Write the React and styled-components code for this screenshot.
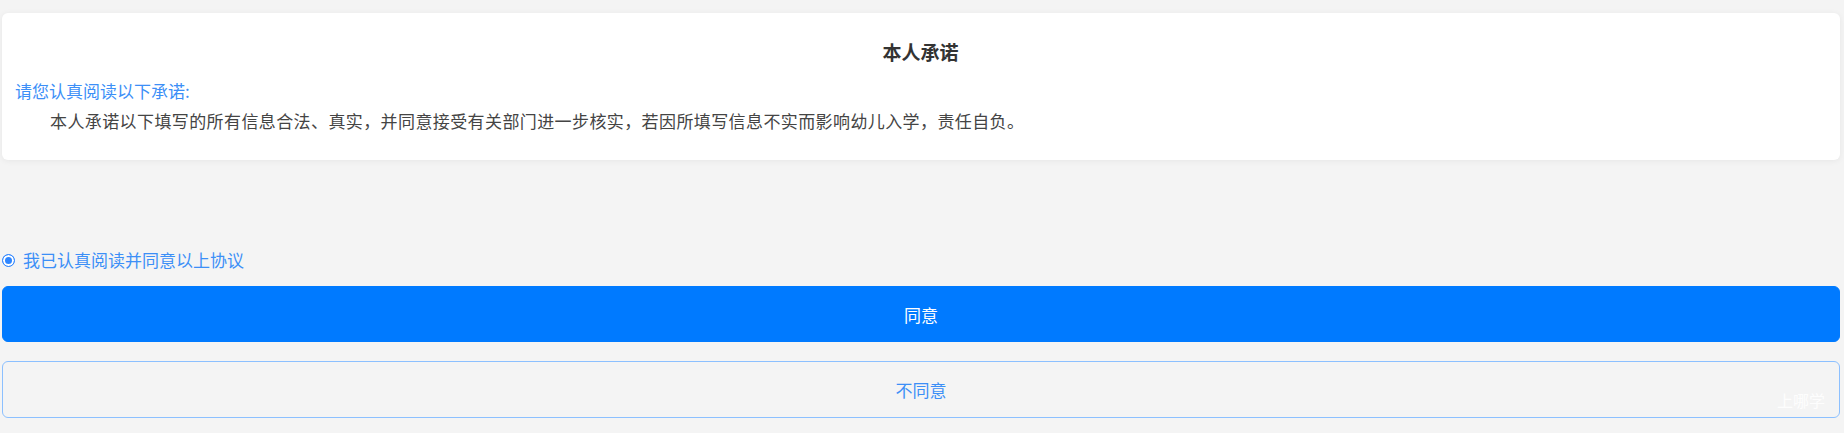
import React, { useState } from "react";
import styled, { createGlobalStyle } from "styled-components";

const GlobalStyle = createGlobalStyle`
  body {
    margin: 0;
    background: #f4f4f4;
    font-family: "Noto Sans CJK SC", "Noto Sans", sans-serif;
  }
`;

const Page = styled.div`
  padding: 13px 4px 0 2px;
  display: flex;
  flex-direction: column;
`;

const Card = styled.div`
  background: #fff;
  border-radius: 6px;
  box-shadow: 0 1px 6px rgba(0, 0, 0, 0.06);
  padding: 26px 14px 24px 13px;
`;

const Title = styled.h2`
  margin: 0 0 11px;
  text-align: center;
  font-size: 19px;
  line-height: 26px;
  font-weight: bold;
  color: #333;
`;

const Hint = styled.div`
  font-size: 17px;
  line-height: 30px;
  color: #3c8ff7;
`;

const Body = styled.p`
  margin: 0;
  font-size: 17px;
  letter-spacing: 0.4px;
  line-height: 30px;
  color: #444;
  text-indent: 35px;
`;

const Agree = styled.label`
  margin-top: 88px;
  display: flex;
  align-items: center;
  gap: 8px;
  font-size: 17px;
  line-height: 24px;
  color: #3c8ff7;
  cursor: pointer;
`;

const Dot = styled.span`
  width: 11px;
  height: 11px;
  border-radius: 50%;
  border: 1.5px solid #2f86ff;
  background: ${(p) => (p.$on ? "#2f86ff" : "#fff")};
  box-shadow: inset 0 0 0 2px #fff;
  flex-shrink: 0;
`;

const Button = styled.button`
  position: relative;
  width: 100%;
  height: ${(p) => (p.$outline ? "57px" : "56px")};
  margin-top: ${(p) => (p.$outline ? "19px" : "14px")};
  border-radius: 6px;
  border: 1.5px solid ${(p) => (p.$outline ? "#8cc0ff" : "#007aff")};
  background: ${(p) => (p.$outline ? "transparent" : "#007aff")};
  color: ${(p) => (p.$outline ? "#3c8ff7" : "#fff")};
  font-family: inherit;
  font-size: 17px;
  cursor: pointer;
`;

const Mark = styled.span`
  position: absolute;
  right: 14px;
  bottom: 5px;
  font-size: 16px;
  color: rgba(255, 255, 255, 0.9);
`;

export default function App() {
  const [agreed, setAgreed] = useState(true);

  return (
    <Page>
      <GlobalStyle />
      <Card>
        <Title>本人承诺</Title>
        <Hint>请您认真阅读以下承诺:</Hint>
        <Body>
          本人承诺以下填写的所有信息合法、真实，并同意接受有关部门进一步核实，若因所填写信息不实而影响幼儿入学，责任自负。
        </Body>
      </Card>
      <Agree onClick={() => setAgreed(!agreed)}>
        <Dot $on={agreed} />
        我已认真阅读并同意以上协议
      </Agree>
      <Button>同意</Button>
      <Button $outline>
        不同意
        <Mark>上哪学</Mark>
      </Button>
    </Page>
  );
}
